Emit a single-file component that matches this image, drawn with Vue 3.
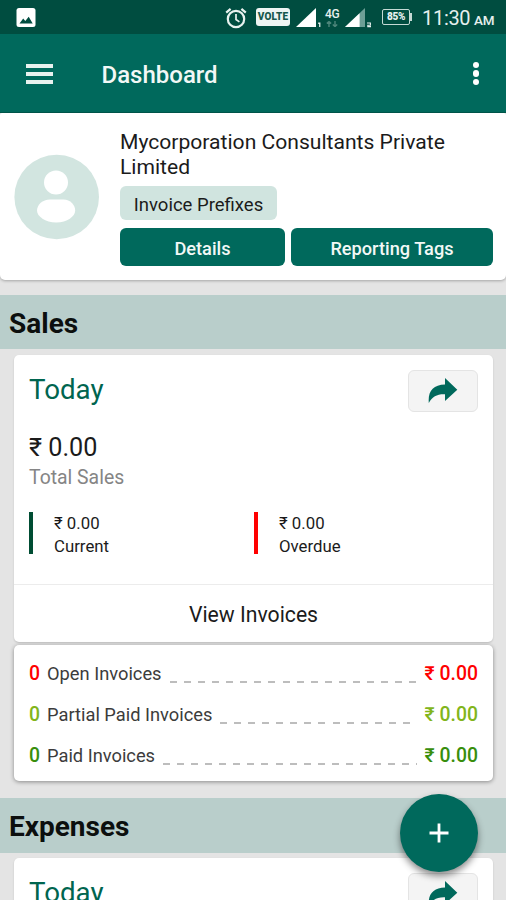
<script setup>
const rows = [
  { count: 0, label: 'Open Invoices', amount: '₹ 0.00', tone: 'red' },
  { count: 0, label: 'Partial Paid Invoices', amount: '₹ 0.00', tone: 'lime' },
  { count: 0, label: 'Paid Invoices', amount: '₹ 0.00', tone: 'green' },
]
</script>

<template>
  <div class="screen">
    <div class="status">
      <svg class="picture" width="20" height="20" viewBox="0 0 20 20">
        <rect x="0.5" y="0" width="19" height="19" rx="2.5" fill="#fff" />
        <path d="M3.5 15.5 7.2 10.6l2.1 2.4 3.4-4.2 4 6.7z" fill="#004d40" />
      </svg>
      <svg class="alarm" width="22" height="22" viewBox="0 0 22 22" fill="none" stroke="#e8f2ef">
        <circle cx="11" cy="12" r="8.2" stroke-width="2.2" />
        <path d="M11 7v5.5l3.4 2.4" stroke-width="1.7" />
        <path d="M1.2 5.6 5.6 1.8M20.8 5.6l-4.400-3.800" stroke-width="2.2" />
      </svg>
      <span class="volte">VOLTE</span>
      <svg class="signal" width="26" height="20" viewBox="0 0 26 20">
        <path d="M0 19 20 0v19z" fill="#fff" />
        <path d="M22.2 14.6h2.2V19h-1.3v-3h-.9z" fill="#e6f0ee" />
      </svg>
      <span class="net">
        <span class="net-label">4G</span>
        <svg width="14" height="6" viewBox="0 0 14 6" fill="none" stroke="#4d857a" stroke-width="1.4">
          <path d="M4 6V0M1.8 2.400 4 .4l2.200 2M10 0v6M7.800 3.600 10 5.600l2.200-2" />
        </svg>
      </span>
      <svg class="signal2" width="27" height="20" viewBox="0 0 27 20">
        <path d="M0 19 20 0v19z" fill="#6d9f96" />
        <path d="M0 19 14.6 5.2V19z" fill="#fff" />
        <path d="M22 15h3.400v2.200h-2.600v1.400h3.200" fill="none" stroke="#e6f0ee" stroke-width="1.1" />
      </svg>
      <span class="battery">85%</span>
      <span class="nub"></span>
      <span class="clock">11:30</span><span class="ampm">AM</span>
    </div>

    <header class="appbar">
      <div class="burger"><i></i><i></i><i></i></div>
      <h1>Dashboard</h1>
      <div class="dots"><i></i><i></i><i></i></div>
    </header>

    <section class="profile">
      <svg class="avatar" width="86" height="86" viewBox="0 0 86 86">
        <circle cx="42.700" cy="43" r="42.300" fill="#d2e5e0" />
        <circle cx="42" cy="28.600" r="12" fill="#fff" />
        <path d="M36 45.500h13.500c7 0 11.700 5.500 11.700 11.200 0 5.500-8 11.700-19 11.700S23 62.200 23 56.700c0-6 5.500-11.200 13-11.200z" fill="#fff" />
      </svg>
      <div class="info">
        <div class="name">Mycorporation Consultants Private Limited</div>
        <button class="prefix">Invoice Prefixes</button>
        <div class="actions">
          <button class="details">Details</button>
          <button class="tags">Reporting Tags</button>
        </div>
      </div>
    </section>

    <h2 class="band">Sales</h2>

    <section class="card">
      <div class="card-head">
        <span class="today">Today</span>
        <button class="share">
          <svg width="30" height="26" viewBox="0 0 30 26"><path d="M.8 25C-.2 13 5 6.800 17 6.400V0l12.300 11.700L17 23V16.300C9 16 4.500 18.500 .8 25z" fill="#00695c" /></svg>
        </button>
      </div>
      <div class="total">₹ 0.00</div>
      <div class="caption">Total Sales</div>
      <div class="split">
        <div class="part current"><span class="amt">₹ 0.00</span><span class="lbl">Current</span></div>
        <div class="part overdue"><span class="amt">₹ 0.00</span><span class="lbl">Overdue</span></div>
      </div>
      <div class="view">View Invoices</div>
    </section>

    <section class="list">
      <div v-for="r in rows" :key="r.label" class="row" :class="r.tone">
        <b class="count">{{ r.count }}</b>
        <span class="label">{{ r.label }}</span>
        <span class="dash"></span>
        <b class="sum">{{ r.amount }}</b>
      </div>
    </section>

    <h2 class="band second">Expenses</h2>

    <section class="card">
      <div class="card-head">
        <span class="today">Today</span>
        <button class="share">
          <svg width="30" height="26" viewBox="0 0 30 26"><path d="M.8 25C-.2 13 5 6.800 17 6.400V0l12.300 11.700L17 23V16.300C9 16 4.500 18.500 .8 25z" fill="#00695c" /></svg>
        </button>
      </div>
    </section>

    <button class="fab"><svg width="20" height="20" viewBox="0 0 20 20"><path d="M10 .5v19M.5 10h19" stroke="#fff" stroke-width="2.800" /></svg></button>
  </div>
</template>

<style>
html, body { margin: 0; overflow: hidden; }
</style>

<style scoped>
* { box-sizing: border-box; }
.screen {
  position: relative;
  width: 506px;
  height: 900px;
  overflow: hidden;
  background: #e4e4e4;
  font-family: Roboto, "Liberation Sans", sans-serif;
  color: #1b1b1b;
  white-space: nowrap;
}
button { font: inherit; color: inherit; border: 0; padding: 0; margin: 0; display: flex; align-items: center; justify-content: center; }
h1, h2 { margin: 0; }
svg { display: block; flex: none; }

.status { display: flex; height: 34px; padding: 8px 0 0 16px; background: #004d40; color: #e6f0ee; }
.alarm { margin: -1px 0 0 189px; }
.volte {
  width: 34px; height: 18px; margin: 0 0 0 9px; border-radius: 3px;
  background: #eef5f3; color: #17584c; text-align: center;
  font-size: 10px; line-height: 18px; font-weight: 900; letter-spacing: .1px;
}
.signal { margin-left: 6px; }
.net { width: 16px; margin-left: 3px; }
.net-label { display: block; font-size: 12px; line-height: 12px; font-weight: 500; letter-spacing: -.2px; }
.net svg { margin-top: 1px; }
.signal2 { margin-left: 4px; }
.battery {
  width: 28px; height: 16px; margin: 1px 0 0 10px; border: 1.500px solid #c5dad5; border-radius: 2px;
  font-size: 10px; line-height: 14px; font-weight: 900; text-align: center; letter-spacing: -.3px;
}
.nub { width: 2px; height: 8px; margin-top: 5px; background: #c5dad5; }
.clock { width: 49px; margin-left: 10px; font-size: 20px; line-height: 21px; letter-spacing: -.3px; }
.ampm { margin: 2px 0 0 3px; font-size: 13.500px; line-height: 20px; letter-spacing: -.3px; font-weight: 500; }

.appbar {
  display: flex; align-items: center; height: 79px; padding: 1px 26px 0;
  background: #00695c; border-bottom: 1px solid #00584c; color: #f2f8f6;
}
.burger { display: flex; flex-direction: column; gap: 4px; width: 27px; }
.burger i { height: 4px; background: #e8f2ef; }
h1 { margin-left: 48.500px; padding-top: 2px; font-size: 24px; font-weight: 500; line-height: 30px; }
.dots { display: flex; flex-direction: column; gap: 2.200px; margin: 0 1px 0 auto; }
.dots i { width: 6.400px; height: 6.400px; border-radius: 50%; background: #fff; }

.profile {
  display: flex; height: 167px; padding: 16px 13px 0 14px; background: #fff;
  border-radius: 2px 2px 5px 5px; box-shadow: 0 1px 3px rgba(0, 0, 0, .28);
}
.avatar { margin-top: 25px; }
.info { width: 373px; margin-left: 20px; }
.name { font-size: 21.100px; line-height: 25px; white-space: normal; }
.prefix { width: 157px; height: 34px; margin-top: 7px; padding-top: 3px; border-radius: 6px; background: #d0e4df; font-size: 18.500px; }
.actions { display: flex; gap: 6px; margin-top: 8px; }
.actions button { height: 38px; border-radius: 6px; background: #00695c; color: #f2f8f6; font-size: 18.200px; font-weight: 500; padding-top: 2px; }
.details { width: 165px; }
.tags { width: 202px; }

.band {
  height: 54px; margin-top: 15px; padding-left: 9px; background: #b9cecb;
  font-size: 28px; line-height: 57px; font-weight: 700; color: #0c0f0e;
}
.second { margin-top: 17px; height: 55px; }
.card {
  width: 479px; height: 287px; margin: 6px 0 0 14px; border-radius: 5px; background: #fff;
  box-shadow: 0 1px 2px rgba(0, 0, 0, .16);
}
.second + .card { margin-top: 5px; }
.card-head { display: flex; justify-content: space-between; height: 75px; padding: 15px 15px 0; }
.today { font-size: 27.700px; line-height: 39px; color: #00654f; }
.share { width: 70px; height: 42px; border: 1.500px solid #e4e4e4; border-radius: 6px; background: #f4f4f4; }
.total { padding-left: 15px; font-size: 25.200px; line-height: 36px; }
.caption { padding-left: 15px; font-size: 19.400px; line-height: 24px; color: #858585; }
.split { display: flex; height: 42px; margin: 22px 0 0 15px; }
.part { display: flex; flex-direction: column; width: 225px; padding-left: 21px; border-left: 4px solid #004d33; line-height: 22.500px; }
.overdue { border-left-color: #f00; }
.amt, .lbl { font-size: 16.800px; }
.view { height: 58px; margin-top: 30px; border-top: 1.500px solid #ececec; text-align: center; font-size: 21.200px; line-height: 60px; }

.list {
  width: 479px; height: 136px; margin: 3px 0 0 14px; padding: 8px 15px 0; border-radius: 5px;
  background: #fff; box-shadow: 0 1px 4px rgba(0, 0, 0, .4);
}
.row { display: flex; height: 41px; line-height: 41px; font-size: 18.300px; color: #3c3c3c; }
.row b { font-weight: 500; font-size: 19.400px; }
.count { width: 18px; }
.dash {
  flex: 1; height: 2px; margin: 28px 8px 0 8px;
  background: repeating-linear-gradient(90deg, #bdbdbd 0 7px, transparent 7px 14.070px);
}
.red b { color: #f00; }
.lime b { color: #82b51b; }
.green b { color: #388e0c; }

.fab {
  position: absolute; left: 400px; top: 794px; width: 78px; height: 78px; border-radius: 50%;
  background: #00695c; box-shadow: 0 4px 7px rgba(0, 0, 0, .45);
}
</style>
